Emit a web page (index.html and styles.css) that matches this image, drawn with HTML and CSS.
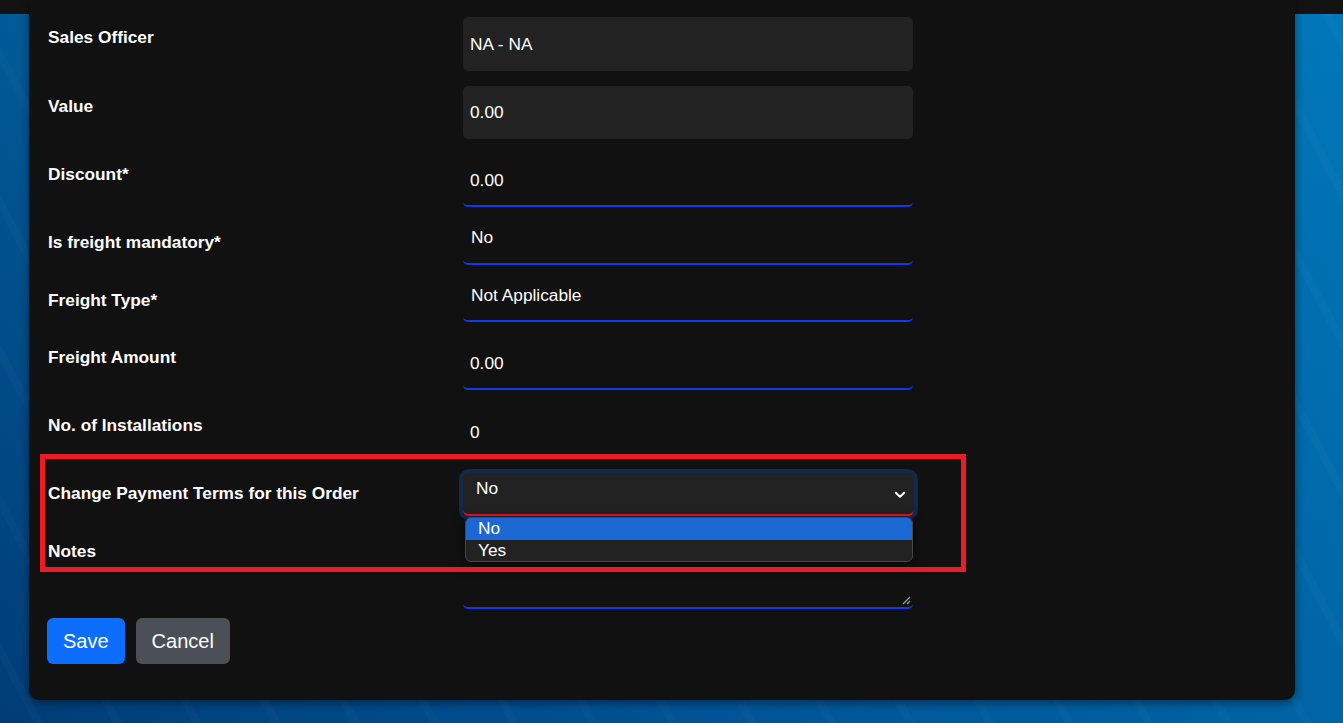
FILE: index.html
```html
<!DOCTYPE html>
<html lang="en">
<head>
<meta charset="utf-8">
<title>Order Form</title>
<link rel="stylesheet" href="styles.css">
</head>
<body>
<div class="topbar"></div>
<div class="stage">
  <div class="modal">
    <div class="row">
      <div class="label">Sales Officer</div>
      <div class="field readonly">NA - NA</div>
    </div>
    <div class="row">
      <div class="label">Value</div>
      <div class="field readonly">0.00</div>
    </div>
    <div class="row">
      <div class="label">Discount*</div>
      <div class="field line">0.00</div>
    </div>
    <div class="row">
      <div class="label">Is freight mandatory*</div>
      <div class="field pick">No</div>
    </div>
    <div class="row">
      <div class="label">Freight Type*</div>
      <div class="field pick">Not Applicable</div>
    </div>
    <div class="row">
      <div class="label">Freight Amount</div>
      <div class="field line">0.00</div>
    </div>
    <div class="row">
      <div class="label">No. of Installations</div>
      <div class="field plain">0</div>
    </div>
    <div class="row">
      <div class="label">Change Payment Terms for this Order</div>
      <div class="select-wrap">
        <div class="field select">
          <span>No</span>
          <svg class="chev" width="12" height="8" viewBox="0 0 12 8"><path d="M1.8 1.8 L6 5.8 L10.2 1.8" fill="none" stroke="#fff" stroke-width="2" stroke-linecap="round" stroke-linejoin="round"/></svg>
        </div>
        <div class="dropdown">
          <div class="opt active">No</div>
          <div class="opt">Yes</div>
        </div>
      </div>
    </div>
    <div class="row notes-row">
      <div class="label">Notes</div>
      <div class="field area">
        <svg class="grip" width="9" height="9" viewBox="0 0 9 9"><path d="M8 1 L1 8 M8 5 L5 8" stroke="#9a9a9a" stroke-width="1.3"/></svg>
      </div>
    </div>
    <div class="actions">
      <button class="btn primary">Save</button>
      <button class="btn secondary">Cancel</button>
    </div>
    <div class="annot"></div>
  </div>
</div>
</body>
</html>
```

FILE: styles.css
```css
html, body {
  margin: 0;
  padding: 0;
}
body {
  width: 1343px;
  height: 723px;
  overflow: hidden;
  font-family: "Liberation Sans", Arial, sans-serif;
  color: #fff;
  background:
    repeating-linear-gradient(62deg, rgba(255,255,255,0) 0 30px, rgba(255,255,255,0.018) 30px 38px, rgba(255,255,255,0) 38px 70px),
    linear-gradient(to bottom, rgba(0,150,215,0.32), rgba(0,40,90,0.08)),
    linear-gradient(to right, #003f7a 0%, #00569a 50%, #006aac 100%);
}
.topbar {
  height: 14px;
  background: #131313;
}
.stage {
  padding: 0 48px 0 29px;
}
.modal {
  position: relative;
  margin-top: -14px;
  padding: 17px 19px 0 19px;
  box-sizing: border-box;
  height: 700px;
  background: #111111;
  border-radius: 0 0 10px 10px;
  box-shadow: 0 3px 10px rgba(0,0,0,0.45);
}
.row {
  display: grid;
  grid-template-columns: 415px 450px;
  margin-bottom: 15px;
}
.label {
  font-weight: bold;
  font-size: 17.3px;
  line-height: 24px;
  padding-top: 8px;
}
.field {
  box-sizing: border-box;
  font-size: 17.3px;
  line-height: 24px;
  color: #fff;
}
.readonly {
  height: 53.5px;
  padding: 14.5px 7px;
  background: #222222;
  border-radius: 5px;
}
.line {
  height: 53px;
  padding: 14px 7px;
  border-bottom: 2px solid #0b3bec;
  border-radius: 5px;
}
.pick {
  height: 42.5px;
  padding: 3px 8px 13px;
  border-bottom: 2px solid #0b3bec;
  border-radius: 5px;
}
.plain {
  height: 53px;
  padding: 14.5px 7px;
}
.select-wrap {
  position: relative;
  width: 450px;
}
.select {
  position: relative;
  height: 43px;
  width: 451px;
  padding: 3px 13px 0;
  background: #222222;
  border-bottom: 2px solid #e8141e;
  border-radius: 6px;
  box-shadow: 0 0 0 4px #12284c;
}
.chev {
  position: absolute;
  right: 8px;
  top: 18px;
}
.dropdown {
  position: absolute;
  left: 2px;
  top: 44px;
  width: 448px;
  box-sizing: border-box;
  border: 1px solid #474747;
  border-radius: 6px;
  background: #222222;
  overflow: hidden;
  box-shadow: 0 4px 14px rgba(0,0,0,0.55);
  z-index: 2;
}
.opt {
  font-size: 17.3px;
  line-height: 21px;
  padding-left: 12px;
  color: #fff;
}
.opt.active {
  background: #1b68d4;
  line-height: 20px;
  padding-bottom: 2px;
}
.notes-row {
  margin-bottom: 9px;
}
.area {
  position: relative;
  height: 78px;
  border-bottom: 2px solid #0b3bec;
  border-radius: 5px;
}
.grip {
  position: absolute;
  right: 2px;
  bottom: 2px;
}
.actions {
  display: flex;
  gap: 11px;
}
.btn {
  font-family: "Liberation Sans", Arial, sans-serif;
  font-size: 20px;
  line-height: 30px;
  padding: 8px 16px;
  border: 0;
  border-radius: 6px;
  color: #fff;
  cursor: pointer;
}
.btn.primary {
  background: #0d6efd;
  margin-left: -1px;
}
.btn.secondary {
  background: #4b5058;
}
.annot {
  position: absolute;
  left: 11px;
  top: 454px;
  width: 926px;
  height: 118px;
  box-sizing: border-box;
  border: 5px solid #ec1b24;
  pointer-events: none;
  z-index: 3;
}
```
